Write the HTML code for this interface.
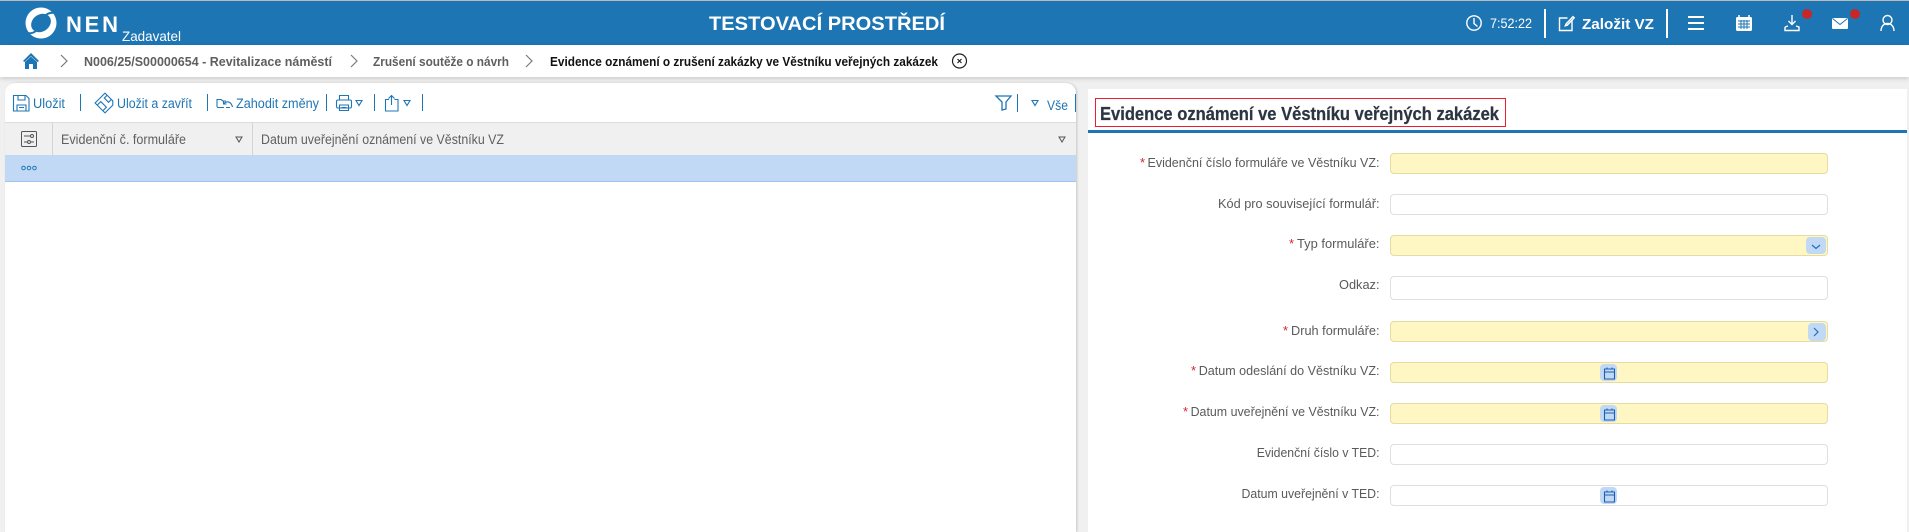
<!DOCTYPE html>
<html lang="cs"><head><meta charset="utf-8"><title>NEN</title>
<style>
html,body{margin:0;padding:0;width:1909px;height:532px;overflow:hidden;background:#f0f0f0;font-family:"Liberation Sans",sans-serif}
.a{position:absolute}
.in{position:absolute;left:1390px;width:436px;height:19px;border:1px solid #dfdfdf;border-radius:4px;background:#fff}
.y{background:#fef7c3;border-color:#e4dca0}
.btn{position:absolute;background:#c2d9f5;border-radius:4px}
svg{position:absolute;left:0;top:0}
text{font-family:"Liberation Sans",sans-serif}
.lb{font-size:13px;fill:#5a5a5a}
.st{font-size:13px;fill:#d8232a}
.tb{font-size:13.5px;fill:#1f76b4}
.th{font-size:13.5px;fill:#5f5f5f}
.bc{font-size:12.5px;font-weight:bold;fill:#5f5f5f}
</style></head><body>
<div class="a" style="left:0;top:0;width:1909px;height:1px;background:#bbb"></div>
<div class="a" style="left:0;top:1px;width:1909px;height:44px;background:#1d75b3"></div>
<div class="a" style="left:0;top:45px;width:1909px;height:32px;background:#fff;box-shadow:0 2px 4px rgba(0,0,0,.14)"></div>
<div class="a" style="left:5px;top:83px;width:1071px;height:449px;background:#fff;border-radius:10px 10px 0 0;box-shadow:1px 0 2px rgba(0,0,0,.18)"></div>
<div class="a" style="left:5px;top:122px;width:1071px;height:33px;background:#f0f0f0;border-top:1px solid #ddd;box-sizing:border-box"></div>
<div class="a" style="left:52px;top:123px;width:1px;height:32px;background:#d4d4d4"></div>
<div class="a" style="left:252px;top:123px;width:1px;height:32px;background:#d4d4d4"></div>
<div class="a" style="left:5px;top:155px;width:1071px;height:26px;background:#c2d9f5;border-bottom:1px solid #9cc5f0"></div>
<div class="a" style="left:1088px;top:89px;width:819px;height:443px;background:#fff"></div>
<div class="a" style="left:1088px;top:130px;width:819px;height:3px;background:#1d75b3"></div>
<div class="a" style="left:1095px;top:98px;width:409px;height:27px;border:1px solid #ed1c2e"></div>

<div class="in y" style="top:153px"></div>
<div class="in" style="top:194px"></div>
<div class="in y" style="top:235px"></div>
<div class="in" style="top:276px;height:22px"></div>
<div class="in y" style="top:321px"></div>
<div class="in y" style="top:362px"></div>
<div class="in y" style="top:403px"></div>
<div class="in" style="top:444px"></div>
<div class="in" style="top:485px"></div>
<div class="btn" style="left:1806px;top:237px;width:20px;height:17px"></div>
<div class="btn" style="left:1808px;top:323px;width:18px;height:18px"></div>
<div class="btn" style="left:1600px;top:364px;width:17px;height:17px"></div>
<div class="btn" style="left:1600px;top:405px;width:17px;height:17px"></div>
<div class="btn" style="left:1600px;top:487px;width:17px;height:17px"></div>

<svg width="1909" height="532" viewBox="0 0 1909 532" fill="none">
<!-- logo -->
<circle cx="41" cy="23" r="15.500" fill="#fff"/>
<ellipse cx="41" cy="23" rx="10.500" ry="8.500" transform="rotate(-35 41 23)" fill="#1d75b3"/>
<path d="M46 15C50 12 54 12 59 14" stroke="#1d75b3" stroke-width="2"/>
<path d="M36 31C32 34 28 34 23 32" stroke="#1d75b3" stroke-width="2"/>
<text x="66" y="32" font-size="22" font-weight="bold" fill="#fff" textLength="52" lengthAdjust="spacing">NEN</text>
<text x="122" y="41" font-size="14" fill="#fff" textLength="59" lengthAdjust="spacingAndGlyphs">Zadavatel</text>
<text x="709" y="30" font-size="19.500" font-weight="bold" fill="#fff" textLength="236" lengthAdjust="spacingAndGlyphs">TESTOVACÍ PROSTŘEDÍ</text>
<!-- top right -->
<g stroke="#fff" stroke-width="1.400">
<circle cx="1474" cy="23" r="7.200"/><path d="M1474 18v5.500l3.500 3"/>
<path d="M1572 20v10.500h-12.500v-12.500h8"/><path d="M1566 24l-.7 1.800 1.900-.6 7-7.300-1.200-1.300z"/>
<path d="M1881 31c0-10 13-10 13 0"/><circle cx="1887.500" cy="20" r="4.500"/>
<path d="M1785 27v3.500h14V27l-3-1M1788 26l-3 1"/><path d="M1792 15v9M1788.500 21l3.500 3.500 3.500-3.500"/>
</g>
<rect x="1544" y="9" width="2" height="29" fill="#fff"/><rect x="1666" y="9" width="2" height="29" fill="#fff"/>
<text x="1490" y="28" font-size="13.500" fill="#fff" textLength="42" lengthAdjust="spacingAndGlyphs">7:52:22</text>
<text x="1582" y="29" font-size="15" font-weight="bold" fill="#fff" textLength="72" lengthAdjust="spacingAndGlyphs">Založit VZ</text>
<path d="M1688 17h16M1688 23h16M1688 29h16" stroke="#fff" stroke-width="2"/>
<rect x="1736" y="17" width="16" height="14" rx="1.500" fill="#fff"/><path d="M1739 15v3M1749 15v3" stroke="#fff" stroke-width="1.500"/>
<path d="M1738 21h12M1738 24h12M1738 27h12M1741 20v9M1744 20v9M1747 20v9" stroke="#1d75b3" stroke-width="1"/>
<rect x="1832" y="18" width="16" height="11" rx="1" fill="#fff"/><path d="M1832.500 18.500l7.500 6 7.500-6" stroke="#1d75b3"/>
<circle cx="1807" cy="14" r="5" fill="#c62828"/><circle cx="1855" cy="14" r="5" fill="#c62828"/>
<!-- breadcrumb -->
<path d="M23 61l8-8 8 8-1.500 1-6.500-6-6.500 6z" fill="#1d75b3"/><path d="M25 62l6-5.500 6 5.500v7h-4v-5h-4v5h-4z" fill="#1d75b3"/>
<path d="M61 55l6 6-6 6M351 55l6 6-6 6M526 55l6 6-6 6" stroke="#7a7a7a" stroke-width="1.200"/>
<text class="bc" x="84" y="66" textLength="248" lengthAdjust="spacingAndGlyphs">N006/25/S00000654 - Revitalizace náměstí</text>
<text class="bc" x="373" y="66" textLength="136" lengthAdjust="spacingAndGlyphs">Zrušení soutěže o návrh</text>
<text class="bc" x="550" y="66" textLength="388" lengthAdjust="spacingAndGlyphs" style="fill:#111">Evidence oznámení o zrušení zakázky ve Věstníku veřejných zakázek</text>
<circle cx="959.500" cy="61" r="7" stroke="#222" stroke-width="1.200"/><path d="M957.500 59l4 4M961.500 59l-4 4" stroke="#222" stroke-width="1.200"/>
<!-- toolbar -->
<g stroke="#1f76b4" stroke-width="1.100">
<path d="M13.500 95.500h12.500l3 3v12.500H13.500z"/><path d="M18 95.500v4.500h7v-4.500M17 111v-6h9v6M19 107.500h5"/>
<g transform="rotate(45 105 103)"><path d="M98 96h11l3 3v11H98z"/><path d="M101 96v4h6v-4M101 110v-5h8v5"/></g>
<path d="M217 107V99.500h4l2 1.500h3M224 107.500h-7"/><path d="M224 103.500c3-3 7-2 8.500 3.500M223.500 101v3h3M226 107.500h4"/>
<rect x="336.500" y="100" width="15" height="8" rx="1.500"/><path d="M339.500 100v-4.500h9v4.500M339.500 105h9v5.500h-9zM341.500 107.500h5"/>
<path d="M389 99.500h-3.500v11.500h12.500V99.500h-3.500M391.500 105V95.500M388.500 98.500l3-3 3 3"/>
<path d="M996 96h15l-5 6v7l-4 1v-8z" stroke-width="1.300"/>
</g>
<g fill="#1f76b4"><rect x="80" y="94" width="1" height="17"/><rect x="207" y="94" width="1" height="17"/><rect x="326" y="94" width="1" height="17"/><rect x="374" y="94" width="1" height="17"/><rect x="422" y="94" width="1" height="17"/><rect x="1017" y="94" width="1" height="18"/><rect x="1075" y="94" width="1" height="18"/></g>
<g stroke="#1f76b4" stroke-width="1.100"><path d="M356 100.500h6l-3 5zM404 100.500h6l-3 5zM1032 100.500h6l-3 5z"/></g>
<text class="tb" x="33" y="108" textLength="32" lengthAdjust="spacingAndGlyphs">Uložit</text>
<text class="tb" x="117" y="108" textLength="75" lengthAdjust="spacingAndGlyphs">Uložit a zavřít</text>
<text class="tb" x="236" y="108" textLength="83" lengthAdjust="spacingAndGlyphs">Zahodit změny</text>
<text class="tb" x="1047" y="110" textLength="21" lengthAdjust="spacingAndGlyphs">Vše</text>
<!-- grid -->
<rect x="21.500" y="131.500" width="15" height="15" rx="1" stroke="#555"/><path d="M24 136h6M24 142h3M31 142h3" stroke="#555"/><circle cx="32" cy="136" r="1.500" stroke="#555"/><circle cx="29" cy="142" r="1.500" stroke="#555"/>
<text class="th" x="61" y="144" textLength="125" lengthAdjust="spacingAndGlyphs">Evidenční č. formuláře</text>
<text class="th" x="261" y="144" textLength="243" lengthAdjust="spacingAndGlyphs">Datum uveřejnění oznámení ve Věstníku VZ</text>
<path d="M236 137h6l-3 5zM1059 137h6l-3 5z" stroke="#555"/>
<circle cx="23.500" cy="168" r="1.800" stroke="#1f76b4"/><circle cx="29" cy="168" r="1.800" stroke="#1f76b4"/><circle cx="34.500" cy="168" r="1.800" stroke="#1f76b4"/>
<!-- form -->
<text x="1100" y="120" font-size="18" font-weight="bold" fill="#2c3643" stroke="#2c3643" stroke-width=".25" textLength="399" lengthAdjust="spacingAndGlyphs">Evidence oznámení ve Věstníku veřejných zakázek</text>
<text class="st" x="1140" y="167">*</text><text class="lb" x="1147.500" y="167" textLength="232" lengthAdjust="spacingAndGlyphs">Evidenční číslo formuláře ve Věstníku VZ:</text>
<text class="lb" x="1218" y="208" textLength="161.500" lengthAdjust="spacingAndGlyphs">Kód pro související formulář:</text>
<text class="st" x="1289" y="248">*</text><text class="lb" x="1297" y="248" textLength="82.500" lengthAdjust="spacingAndGlyphs">Typ formuláře:</text>
<text class="lb" x="1339" y="289" textLength="40.500" lengthAdjust="spacingAndGlyphs">Odkaz:</text>
<text class="st" x="1283" y="335">*</text><text class="lb" x="1291" y="335" textLength="88.500" lengthAdjust="spacingAndGlyphs">Druh formuláře:</text>
<text class="st" x="1191" y="375">*</text><text class="lb" x="1198.700" y="375" textLength="180.800" lengthAdjust="spacingAndGlyphs">Datum odeslání do Věstníku VZ:</text>
<text class="st" x="1183" y="416">*</text><text class="lb" x="1190.600" y="416" textLength="188.900" lengthAdjust="spacingAndGlyphs">Datum uveřejnění ve Věstníku VZ:</text>
<text class="lb" x="1256.700" y="457" textLength="122.800" lengthAdjust="spacingAndGlyphs">Evidenční číslo v TED:</text>
<text class="lb" x="1241.500" y="498" textLength="138" lengthAdjust="spacingAndGlyphs">Datum uveřejnění v TED:</text>
<path d="M1812 245l4 3.500 4-3.500M1814 328l4 4-4 4" stroke="#1f6fc0" stroke-width="1.200"/>
<g stroke="#1c5fb0" stroke-width="1.100">
<path d="M1604.500 369h10v10h-10zM1604.500 372h10M1607 367.500v2M1612 367.500v2"/>
<path d="M1604.500 410h10v10h-10zM1604.500 413h10M1607 408.500v2M1612 408.500v2"/>
<path d="M1604.500 492h10v10h-10zM1604.500 495h10M1607 490.500v2M1612 490.500v2"/>
</g>
</svg>
</body></html>
